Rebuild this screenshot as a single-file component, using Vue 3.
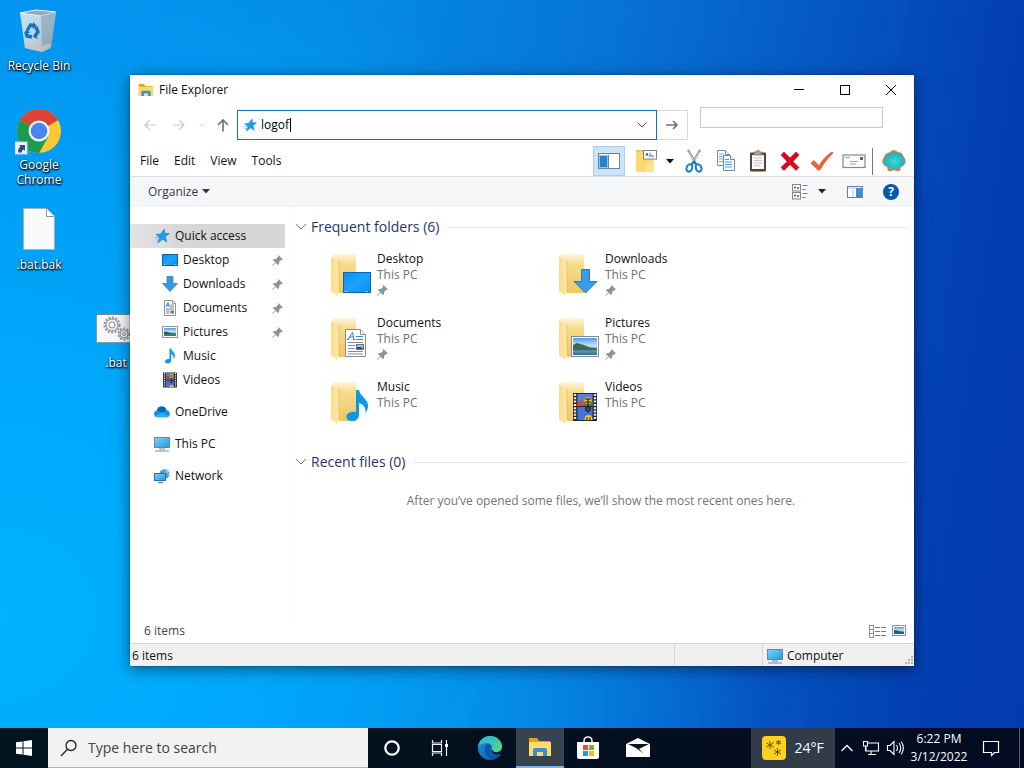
<script setup>
import { ref } from 'vue'

const address = ref('logof')
const filter = ref('')
const search = ref('')

const pinned = [
  { name: 'Desktop', icon: 'desktop', pin: true },
  { name: 'Downloads', icon: 'download', pin: true },
  { name: 'Documents', icon: 'document', pin: true },
  { name: 'Pictures', icon: 'picture', pin: true },
  { name: 'Music', icon: 'music', pin: false },
  { name: 'Videos', icon: 'video', pin: false },
]
const roots = [
  { name: 'OneDrive', icon: 'cloud' },
  { name: 'This PC', icon: 'pc' },
  { name: 'Network', icon: 'network' },
]
const tools = [
  { name: 'Cut', icon: 'cut' },
  { name: 'Copy', icon: 'copy' },
  { name: 'Paste', icon: 'paste' },
  { name: 'Delete', icon: 'delete' },
  { name: 'Properties', icon: 'check' },
  { name: 'E-mail', icon: 'email' },
]
</script>

<template>
  <div class="screen">
    <svg class="sprites" aria-hidden="true">
      <defs>
        <linearGradient id="blueFill" x1="0" y1="0" x2="1" y2="1">
          <stop offset="0" stop-color="#0a8cf0" /><stop offset=".5" stop-color="#1ba4ff" /><stop offset="1" stop-color="#0a8df0" />
        </linearGradient>
        <linearGradient id="pcFill" x1="0" y1="0" x2="1" y2="1">
          <stop offset="0" stop-color="#7fd0f6" /><stop offset="1" stop-color="#1f9be0" />
        </linearGradient>
        <linearGradient id="folderBack" x1="0" y1="0" x2="0" y2="1">
          <stop offset="0" stop-color="#fdf6dc" /><stop offset=".25" stop-color="#f8dc8e" /><stop offset="1" stop-color="#efc765" />
        </linearGradient>
        <linearGradient id="folderFront" x1="0" y1="0" x2="1" y2="0">
          <stop offset="0" stop-color="#f7dc8c" /><stop offset="1" stop-color="#ffe9a6" />
        </linearGradient>
        <linearGradient id="photo" x1="0" y1="0" x2="0" y2="1">
          <stop offset="0" stop-color="#4f9ce8" /><stop offset=".45" stop-color="#c7e4f5" /><stop offset=".6" stop-color="#7fb3c4" /><stop offset="1" stop-color="#2c6f92" />
        </linearGradient>
        <linearGradient id="edgeTop" x1="0" y1="0" x2="1" y2="1">
          <stop offset="0" stop-color="#36b4e5" /><stop offset=".55" stop-color="#38c9b0" /><stop offset="1" stop-color="#72da58" />
        </linearGradient>
        <linearGradient id="edgeBase" x1="0" y1="0" x2="1" y2="1">
          <stop offset="0" stop-color="#1b9de2" /><stop offset="1" stop-color="#0c4aa0" />
        </linearGradient>
        <linearGradient id="binFill" x1="0" y1="0" x2="1" y2="1">
          <stop offset="0" stop-color="#c9e3f3" /><stop offset=".6" stop-color="#b9cfdd" /><stop offset="1" stop-color="#9d9fa5" />
        </linearGradient>
        <radialGradient id="shellFill" cx=".5" cy=".55" r=".6">
          <stop offset="0" stop-color="#46dde0" /><stop offset=".7" stop-color="#22b5bd" /><stop offset="1" stop-color="#6d9a72" />
        </radialGradient>
      </defs>

      <symbol id="star" viewBox="0 0 16 16">
        <path d="M10.300 1l.5 4.300 4.700.2-4 3 1.300 5.400-4.100-2.700L3.800 15l1.900-5.500L2 6.500l4.700-.6z" fill="#229bea" stroke="#1680ce" stroke-width=".6" />
        <path d="M1 9.500h4M2 12h3" stroke="#4aabe8" stroke-width=".8" />
      </symbol>
      <symbol id="desktop" viewBox="0 0 16 16">
        <rect x=".5" y="2.500" width="15" height="11" fill="url(#blueFill)" stroke="#0766ad" />
        <path d="M2 12.500h1M12.500 12.500h2" stroke="#d8f0ff" stroke-width=".6" />
      </symbol>
      <symbol id="download" viewBox="0 0 16 16">
        <path d="M5 .5h6v7h4.500L8 15.500.5 7.500H5z" fill="#3a94e2" stroke="#2879bd" stroke-width=".7" />
      </symbol>
      <symbol id="document" viewBox="0 0 16 16">
        <path d="M2.500.5h8l3 3v12h-11z" fill="#fff" stroke="#8b9298" />
        <path d="M10.500.5v3h3" fill="none" stroke="#8b9298" stroke-width=".8" />
        <path d="M4 7l2-4.500L7.500 7M4.700 5.500h2.200" fill="none" stroke="#2583c9" />
        <path d="M8.500 5h3.500M8 7h4M4 9h8M4 11h3.500M4 13h3.500" stroke="#617386" stroke-width=".9" />
        <rect x="8.500" y="10.500" width="3.500" height="3" fill="#5a7791" />
      </symbol>
      <symbol id="picture" viewBox="0 0 16 16">
        <rect x=".5" y="2.500" width="15" height="11" fill="#fff" stroke="#8795a0" />
        <rect x="2" y="4" width="12" height="8" fill="url(#photo)" />
        <path d="M2 7.500c3 0 5 1 7 1.700l5 .6v.7H2z" fill="#34594f" />
      </symbol>
      <symbol id="music" viewBox="0 0 16 16">
        <path d="M7.500.5h1.700c.3 3 4.100 3.600 3.700 7.500-.2 1.500-1 2.500-1.700 3 .8-2.800-.3-4.300-2-5v6.200c0 2-1.700 3.300-3.500 3.300s-2.800-1-2.700-2.300c.1-1.500 2-2.700 4.500-2.200z" fill="#0b98e8" />
      </symbol>
      <symbol id="video" viewBox="0 0 16 16">
        <rect x="1" y=".5" width="14" height="15" fill="#292b30" />
        <path d="M2.500 1v14M13.500 1v14" stroke="#e5e5e5" stroke-width="1.300" stroke-dasharray="1.300 1" />
        <rect x="4" y="1" width="8" height="6.500" fill="#5575ce" /><rect x="4" y="8.500" width="8" height="6.500" fill="#4b6fd0" />
        <path d="M4 5l3-1 1 2 4-1v2.500H4z" fill="#9c4557" />
        <circle cx="9.500" cy="4" r="2" fill="#e8c51c" /><path d="M8 4h3.500M9.500 6v4M7.800 9l1.700 2 1.800-2" stroke="#282522" stroke-width=".8" fill="none" />
        <path d="M7.500 15a2 2 0 0 1 4 0z" fill="#edc813" />
      </symbol>

      <symbol id="desktop-large" viewBox="0 0 28 32">
        <rect x=".5" y="10.500" width="27" height="20" fill="url(#blueFill)" stroke="#0766ad" />
        <path d="M2 29.500h3M22 29.500h4" stroke="#d8f0ff" stroke-dasharray="1 1" />
      </symbol>
      <symbol id="download-large" viewBox="0 0 28 32">
        <path d="M10.500 7.500h8v12H26L14.500 31 3 19.500h7.500z" fill="#3a9be8" stroke="#2879bd" />
      </symbol>
      <symbol id="document-large" viewBox="0 0 28 32">
        <path d="M2.500 3.500h15l5 5v22h-20z" fill="#fff" stroke="#858c92" />
        <path d="M17.500 3.500v5h5" fill="#f4f5f6" stroke="#858c92" />
        <path d="M5 13.500l4.500-7 1.500 7M6.500 11h4M4 13.500h2M10 13.500h2" fill="none" stroke="#2583c9" />
        <path d="M13 10.500h7M13 13.500h7" stroke="#3d8bca" />
        <path d="M5 16.500h15M5 19.500h7M5 22.500h7M5 25.500h15M5 28h15" stroke="#7390a8" />
        <rect x="13.500" y="18.500" width="7" height="5" fill="#a9c3d5" stroke="#5f7181" /><path d="M14 21h4l2 2h-6z" fill="#324f62" />
      </symbol>
      <symbol id="picture-large" viewBox="0 0 28 32">
        <rect x=".5" y="10.500" width="27" height="20" fill="#fff" stroke="#7f8c97" />
        <rect x="2" y="12" width="24" height="17" fill="url(#photo)" />
        <path d="M2 19l4-2 7 2 6 2.500 7 1v1H2z" fill="#3d6e4c" /><path d="M2 22.500h24v2H2z" fill="#335c62" opacity=".7" />
      </symbol>
      <symbol id="music-large" viewBox="0 0 28 32">
        <path d="M13 0h3c1 7 10 9 9 17-.3 3-2 5-3 6.500 1.500-5-1-9-6-10.500v12c0 4-3.500 6-7 6s-6-2-5.500-5c.5-3 4.500-5 9.500-4z" fill="#0b98e8" />
      </symbol>
      <symbol id="video-large" viewBox="0 0 28 32">
        <rect x="2" y="3" width="24" height="28" fill="#25272c" />
        <path d="M4 4v26M24 4v26" stroke="#eaeaea" stroke-width="2.400" stroke-dasharray="2 1.300" />
        <rect x="6.500" y="4" width="15" height="12" fill="#5d80d4" /><rect x="6.500" y="17" width="15" height="13" fill="#4772d6" />
        <path d="M6.500 12l3-2 3 3 3-1 6 1v3h-15z" fill="#c94b4c" /><path d="M12 16q4-4 9.500-3v3z" fill="#3e7c50" />
        <circle cx="17" cy="10.500" r="3.500" fill="#f0cf19" /><path d="M14 9h6M14 12h6M17 8v12M14 18l3 4 3-4M15 21v-4h4v4" stroke="#25211c" stroke-width="1.200" fill="none" />
        <path d="M13.500 30q0-5 4-5t4 5z" fill="#f0cf19" /><path d="M16 27v3M19 27v3" stroke="#25211c" />
      </symbol>

      <symbol id="cloud" viewBox="0 0 16 16">
        <path d="M3 6.500A4.800 4.800 0 0 1 12.300 6C14.500 6.300 16 8 15.800 10.200c-.2 1.800-1.400 3-3.300 3H3.600C1.400 13.200 0 11.700 0 9.800c0-1.800 1.300-3.100 3-3.300z" fill="#168de2" />
        <path d="M3 6.500A4.800 4.800 0 0 1 12.300 6L8.500 8.500 3 6.500z" fill="#0864b7" />
        <path d="M8.500 8.500L14.700 12.200c-.6.700-1.300 1-2.200 1H3.600c-1.100 0-1.900-.3-2.600-1z" fill="#29b0ef" />
      </symbol>
      <symbol id="pc" viewBox="0 0 16 16">
        <rect x=".5" y="1.500" width="15" height="10" fill="url(#pcFill)" stroke="#4e7891" stroke-width=".8" />
        <path d="M5 13h6M1 15h14" stroke="#6f8ba0" />
      </symbol>
      <symbol id="network" viewBox="0 0 16 16">
        <circle cx="10.500" cy="6" r="5" fill="#469ed0" />
        <path d="M7 3c2-2 5-2 7 0-1 1-1 2 1 4M8 10c0-3 2-5 5-7" stroke="#a3ddf4" fill="none" />
        <rect x=".5" y="5.500" width="11" height="7" fill="url(#pcFill)" stroke="#28719f" />
        <path d="M4 14.500h5" stroke="#4f91b5" stroke-width="1.500" />
      </symbol>
      <symbol id="pin" viewBox="0 0 12 12">
        <path d="M7 0l5 5-1.200.6-.7-.3-2.400 2.600.1 2L6.500 11 4 8.500.5 12 0 11.500 3.500 8 1 5.500 2.200 4.300l2 .1L6.800 2 6.400 1z" fill="#8d949b" />
      </symbol>
      <symbol id="folder" viewBox="0 0 32 48">
        <path d="M4 3h22c1 0 1 1 1 2v37H10L2 8z" fill="url(#folderBack)" />
        <path d="M2 6l8 4v31l-2 4-5-4c-1 0-1-1-1-2z" fill="url(#folderFront)" />
        <path d="M10 10v31" stroke="#e6bd5d" stroke-width=".8" />
      </symbol>
      <symbol id="explorer" viewBox="0 0 24 20">
        <path d="M1 1h8l2 3h11v15H1z" fill="#e3a01f" /><path d="M1 5h22v14H1z" fill="#ffdb6c" />
        <path d="M5 19v-6q0-2 2-2h10q2 0 2 2v6h-4v-4H9v4z" fill="#3d8fcc" />
      </symbol>
      <symbol id="cut" viewBox="0 0 24 24">
        <path d="M6 1l8.500 15M18 1L9.500 16" stroke="#7f8a94" stroke-width="2.200" />
        <path d="M6.500 2.500L12 12M17.500 2.500L12 12" stroke="#d7dde1" />
        <path d="M10 16c-2-2-5 0-5.500 3s2 4.500 4 3 2-4 1.500-6zM14 16c2-2 5 0 5.500 3s-2 4.500-4 3-2-4-1.500-6z" fill="none" stroke="#1680c4" stroke-width="2" />
        <path d="M9.500 16L12 12.500l2.500 3.500" fill="none" stroke="#1680c4" stroke-width="2" />
      </symbol>
      <symbol id="copy" viewBox="0 0 24 24">
        <g fill="#fff" stroke="#788ca0"><path d="M3.500 1.500h8l4 4v11h-12z" /><path d="M11.500 1.500v4h4" /></g>
        <path d="M5 5h5M5 7.500h7M5 10h7M5 12.500h7" stroke="#6aaee0" />
        <g fill="#fff" stroke="#71869b"><path d="M9.500 6.500h7l4 4v11h-11z" /><path d="M16.500 6.500v4h4" /></g>
        <path d="M11 10.500h4M11 13h7M11 15.500h7M11 18h7" stroke="#469bd8" />
      </symbol>
      <symbol id="paste" viewBox="0 0 24 24">
        <rect x="4" y="3.500" width="16" height="19" rx="1" fill="#554634" /><rect x="6" y="6" width="12" height="14" fill="#f8f9fa" />
        <path d="M8 6V3h2q2-4 4 0h2v3z" fill="#a6a69b" stroke="#6e6959" stroke-width=".7" />
        <path d="M8 9h8M8 11.500h8M8 14h8M8 16.500h6" stroke="#c1c8ce" />
      </symbol>
      <symbol id="delete" viewBox="0 0 24 24">
        <path d="M6 3l6 6 6-6 3 3-6 6.500 6 6-3 3-6-6-6 6-3-3 6-6L3 6z" fill="#d9091c" stroke="#a8101a" stroke-width=".6" />
      </symbol>
      <symbol id="check" viewBox="0 0 24 24">
        <path d="M1 14l3-2.500 5 5.500C13 10 17 6 22 3l1 1C18 9 13 15 10 21H8z" fill="#ee6534" stroke="#c34624" stroke-width=".6" />
      </symbol>
      <symbol id="email" viewBox="0 0 24 24">
        <rect x="1" y="6" width="22" height="12.500" fill="#fcfcfc" stroke="#7e8990" stroke-width="1.200" />
        <path d="M3 8.500h5M8 12.500h8M8 15h6" stroke="#9aa2a8" /><rect x="18" y="8" width="3" height="3" fill="#2e7798" />
      </symbol>
      <symbol id="shell" viewBox="0 0 26 24">
        <path d="M6 18C1 16 0 12 3 8c1-4 4-4 6-5 3-3 5-2 8 0 4 0 5 3 6 5 3 4 2 8-3 10l-1 4h-4l-2-1-2 1H7z" fill="#d9834a" />
        <path d="M8 19C2 16 1 11 5 8c0-3 3-4 5-4 2-2 5-2 7 0 3 0 5 2 5 4 3 4 2 8-4 11l-5 2z" fill="url(#shellFill)" />
        <path d="M12 19L6 8M13 19l-2-14M14 19l3-14M15 19l6-11" stroke="#2bc2cb" fill="none" stroke-width=".7" />
      </symbol>
      <symbol id="caret" viewBox="0 0 8 5"><path d="M0 0h8L4 4.500z" fill="currentColor" /></symbol>
    </svg>

    <main class="desktop">
      <nav class="shortcuts" aria-label="Desktop">
        <a href="#recycle" class="shortcut bin">
          <svg viewBox="0 0 40 44" width="40" height="44">
            <path d="M1 4l16-3 20 2-5 36-9 4-17-4z" fill="url(#binFill)" />
            <path d="M1 4l21 3 15-4-20-2z" fill="#8fabbb" stroke="#e4f3fa" />
            <path d="M22 7l1 36 9-4 5-36z" fill="#809bae" opacity=".55" />
            <path d="M5 34l18 3 9-3-1 5-8 4-17-4z" fill="#cfc4c3" opacity=".7" />
            <g fill="none" stroke="#1175c5" stroke-width="3.400"><path d="M8.500 21l3-5 4 1" /><path d="M17 18l2 5-3 4" /><path d="M13 28l-5-1-1-4" /></g>
            <path d="M14 13l4 4-4 3zM19 30l-5-2 2-4zM5 24l3-4 3 4z" fill="#1175c5" />
          </svg>
          <span>Recycle Bin</span>
        </a>
        <a href="#chrome" class="shortcut chrome">
          <svg viewBox="0 0 48 48" width="48" height="48">
            <circle cx="24" cy="24" r="22" fill="#fbc934" />
            <path d="M24 24L4.950 13A22 22 0 0 1 43.050 13z" fill="#db4437" />
            <path d="M43.050 13H24v11z" fill="#db4437" />
            <path d="M4.950 13A22 22 0 0 0 24 46l9.500-16.500L24 24z" fill="#1a9b50" />
            <circle cx="24" cy="24" r="10.500" fill="#f4f6f8" /><circle cx="24" cy="24" r="8.300" fill="#4a86ee" />
            <rect x="0" y="35" width="12" height="12" fill="#f4f6f8" stroke="#c9d5df" />
            <path d="M3.500 45.500c-1-3 0-4.500 2-6L4 38h6v6l-1.500-1.500c-1.500 1-2 2-1.500 3z" fill="#23508f" />
          </svg>
          <span>Google Chrome</span>
        </a>
        <a href="#bak" class="shortcut bak">
          <svg viewBox="0 0 32 42" width="32" height="42">
            <path d="M.5.5h23l8 8v33H.5z" fill="#f9fafb" stroke="#a4aeb5" /><path d="M23.500.5v8h8" fill="#fff" stroke="#8d9aa4" />
          </svg>
          <span>.bat.bak</span>
        </a>
      </nav>

      <a href="#bat" class="shortcut bat">
        <svg viewBox="0 0 40 30" width="40" height="30">
          <rect x=".5" y=".5" width="39" height="29" fill="#f8f8f8" stroke="#8a969e" /><path d="M0 1h40" stroke="#7b868c" stroke-width="2" />
          <g fill="#ededee" stroke="#8e9296"><circle cx="16" cy="12" r="7.500" stroke-width="2" stroke-dasharray="2 1.500" /><circle cx="16" cy="12" r="6" /><circle cx="16" cy="12" r="3" fill="#f8f8f8" />
            <circle cx="28" cy="21" r="5.500" stroke-width="2" stroke-dasharray="2 1.500" /><circle cx="28" cy="21" r="4" /><circle cx="28" cy="21" r="1.500" /></g>
        </svg>
        <span>.bat</span>
      </a>

      <section class="window" aria-label="File Explorer">
        <header class="titlebar">
          <svg class="i16"><use href="#explorer" /></svg>
          <h1>File Explorer</h1>
          <div class="controls">
            <button aria-label="Minimize"><svg viewBox="0 0 12 12" width="12" height="12"><path d="M1 5.500h10" stroke="#000" /></svg></button>
            <button aria-label="Maximize"><svg viewBox="0 0 12 12" width="12" height="12"><rect x="1.500" y="1.500" width="9" height="9" fill="none" stroke="#000" /></svg></button>
            <button aria-label="Close"><svg viewBox="0 0 12 12" width="12" height="12"><path d="M1 1l10 10M11 1L1 11" stroke="#000" /></svg></button>
          </div>
        </header>

        <div class="address-row">
          <div class="history">
            <button aria-label="Back"><svg viewBox="0 0 14 14" width="14" height="14"><path d="M13 7H2M6.500 2.500L2 7l4.500 4.500" class="faint" /></svg></button>
            <button aria-label="Forward"><svg viewBox="0 0 14 14" width="14" height="14"><path d="M1 7h11M7.500 2.500L12 7l-4.500 4.500" class="faint" /></svg></button>
            <button class="recent" aria-label="Recent locations"><svg viewBox="0 0 8 8" width="6" height="6"><path d="M1 2.500l3 3 3-3" class="faint" /></svg></button>
            <button class="up" aria-label="Up"><svg viewBox="0 0 14 14" width="14" height="14"><path d="M7 13.500V2M2 7l5-5 5 5" fill="none" stroke="#73777a" stroke-width="1.700" /></svg></button>
          </div>
          <div class="address">
            <svg class="i14"><use href="#star" /></svg>
            <input v-model="address" aria-label="Address" />
            <i class="text-caret"></i>
            <button aria-label="Previous locations"><svg viewBox="0 0 10 6" width="10" height="6"><path d="M.5.5L5 5 9.500.5" fill="none" stroke="#555" /></svg></button>
          </div>
          <button class="go" aria-label="Go"><svg viewBox="0 0 14 14" width="14" height="14"><path d="M1 7h11M8 3l4 4-4 4" fill="none" stroke="#737373" stroke-width="1.700" /></svg></button>
          <input v-model="filter" class="filter" aria-label="Search this folder" />
        </div>

        <div class="menu-row">
          <nav class="menu" aria-label="Menu">
            <button>File</button><button>Edit</button><button>View</button><button>Tools</button>
          </nav>
          <div class="tools">
            <button class="active" aria-label="Navigation pane"><svg viewBox="0 0 22 18" width="22" height="18"><rect x=".5" y="1.500" width="21" height="15" fill="#fff" stroke="#6684a0" /><path d="M0 1.500h22" stroke="#6e7985" /><rect x="1" y="3" width="9" height="13" fill="#8cc4ef" /><rect x="2" y="4" width="7" height="11" fill="#2881cf" /><path d="M10.500 3v13" stroke="#6684a0" /></svg></button>
            <button class="folder-tool" aria-label="Go to folder"><svg viewBox="0 0 24 24" width="24" height="24"><path d="M2 1h8l2 2h8v19.500H2z" fill="#f4c748" /><path d="M2 3h10l8 8v11.500H2z" fill="#fbd96f" /><path d="M12 22.500v-6l8-5v11z" fill="#fde48f" /><rect x="9.500" y="1.500" width="13" height="8.500" fill="#fff" stroke="#78838c" /><path d="M12 7l1-3 1 3M15 5h2M15 7h5" stroke="#3d6e8e" fill="none" /></svg></button>
            <button class="drop" aria-label="Folder list"><svg width="8" height="5"><use href="#caret" /></svg></button>
            <button v-for="tool in tools" :key="tool.name" :aria-label="tool.name"><svg width="24" height="24"><use :href="'#' + tool.icon" /></svg></button>
            <span class="divider"></span>
            <button aria-label="Classic shell settings"><svg width="26" height="24"><use href="#shell" /></svg></button>
          </div>
        </div>

        <div class="command-bar">
          <button class="organize">Organize <svg width="8" height="5"><use href="#caret" /></svg></button>
          <div class="view-tools">
            <button class="mode" aria-label="View mode"><svg viewBox="0 0 16 16" width="16" height="16"><g fill="#f9fafb" stroke="#7d868d"><rect x=".5" y=".5" width="8" height="6.500" /><rect x=".5" y="8.500" width="8" height="6.500" /></g><path d="M2 3.500h2M5 4h2M2 11.500h2M5 12h2" stroke="#50595f" stroke-width="1.500" /><path d="M10.500 1.500h5M10.500 5.500h3M10.500 9.500h5M10.500 13.500h3" stroke="#777f84" /></svg></button>
            <button class="drop" aria-label="More views"><svg width="8" height="5"><use href="#caret" /></svg></button>
            <button class="pane" aria-label="Preview pane"><svg viewBox="0 0 16 12" width="16" height="12"><rect x=".5" y=".5" width="15" height="11" fill="#fff" stroke="#71818f" /><path d="M1 2h9M6 3v8" stroke="#b4bfc8" /><rect x="9" y="2" width="6" height="9" fill="#3c8ed0" /></svg></button>
            <button aria-label="Help"><span class="help">?</span></button>
          </div>
        </div>

        <div class="body">
          <nav class="tree" aria-label="Folders">
            <a href="#quick" class="root selected"><svg class="i16"><use href="#star" /></svg><span>Quick access</span></a>
            <a v-for="item in pinned" :key="item.name" :href="'#' + item.name" class="leaf">
              <svg class="i16"><use :href="'#' + item.icon" /></svg><span>{{ item.name }}</span>
              <svg v-if="item.pin" class="pin"><use href="#pin" /></svg>
            </a>
            <a v-for="item in roots" :key="item.name" :href="'#' + item.name" class="root spaced">
              <svg class="i16"><use :href="'#' + item.icon" /></svg><span>{{ item.name }}</span>
            </a>
          </nav>

          <div class="content">
            <h2><svg viewBox="0 0 12 8" width="12" height="8"><path d="M1 1l5 5 5-5" fill="none" stroke="#777" /></svg>Frequent folders (6)</h2>
            <div class="tiles">
              <a v-for="item in pinned" :key="item.name" :href="'#' + item.name" class="tile">
                <span class="thumb">
                  <svg class="folder"><use href="#folder" /></svg>
                  <svg class="overlay"><use :href="'#' + item.icon + '-large'" /></svg>
                </span>
                <span class="label">
                  <span>{{ item.name }}</span><small>This PC</small>
                  <svg v-if="item.pin" class="pin"><use href="#pin" /></svg>
                </span>
              </a>
            </div>
            <h2><svg viewBox="0 0 12 8" width="12" height="8"><path d="M1 1l5 5 5-5" fill="none" stroke="#777" /></svg>Recent files (0)</h2>
            <p>After you’ve opened some files, we’ll show the most recent ones here.</p>
          </div>
        </div>

        <div class="details">
          <span>6 items</span>
          <div class="layouts">
            <button aria-label="Details"><svg viewBox="0 0 17 13" width="17" height="13"><g fill="none" stroke="#8b9094"><rect x=".5" y=".5" width="4" height="4" /><rect x=".5" y="4.500" width="4" height="4" /><rect x=".5" y="8.500" width="4" height="4" /></g><path d="M6 2.500h11M6 6.500h11M6 10.500h11" stroke="#777" stroke-dasharray="5 1" /></svg></button>
            <button aria-label="Large icons"><svg viewBox="0 0 14 12" width="14" height="12"><rect x=".5" y=".5" width="13" height="10" fill="#fff" stroke="#789aae" /><rect x="2" y="2" width="10" height="7" fill="url(#photo)" /><path d="M2 5c4 0 6 2 10 2v2H2z" fill="#33596b" /></svg></button>
          </div>
        </div>
        <footer class="status">
          <span class="count">6 items</span><span class="blank"></span>
          <span class="zone"><svg class="i16"><use href="#pc" /></svg>Computer</span>
          <svg class="grip" viewBox="0 0 9 9" width="9" height="9"><path d="M7 1h2M4 4h2M7 4h2M1 7h2M4 7h2M7 7h2" stroke="#b4b4b4" stroke-width="2" /></svg>
        </footer>
      </section>
    </main>

    <footer class="taskbar">
      <button aria-label="Start"><svg viewBox="0 0 16 16" width="16" height="16"><path d="M0 2.300L6.500 1.400v6.100H0zM7.500 1.200L16 0v7.500H7.500zM0 8.500h6.500v6.100L0 13.700zM7.500 8.500H16V16l-8.500-1.200z" fill="#fff" /></svg></button>
      <label class="search">
        <svg viewBox="0 0 18 18" width="18" height="18"><circle cx="11" cy="6.500" r="5" fill="none" stroke="#222" stroke-width="1.300" /><path d="M7.500 10.200L1 17" stroke="#222" stroke-width="1.300" /></svg>
        <input v-model="search" aria-label="Search" placeholder="Type here to search" />
      </label>
      <button aria-label="Cortana"><svg viewBox="0 0 18 18" width="18" height="18"><circle cx="9" cy="9" r="6.700" fill="none" stroke="#f4f7f8" stroke-width="2.300" /></svg></button>
      <button aria-label="Task view"><svg viewBox="0 0 18 18" width="18" height="18"><path d="M1.500 1v3h9V1M1.500 17v-3h9v3M1.500 5.500h9v7h-9zM15.500 1v16" fill="none" stroke="#eef3f5" stroke-width="1.200" /><rect x="14" y="5" width="3" height="3" fill="#fff" /></svg></button>
      <button class="wide" aria-label="Edge"><svg viewBox="0 0 26 26" width="26" height="26">
        <circle cx="13" cy="13" r="12" fill="url(#edgeBase)" />
        <path d="M1 12C2 5 7 1 13 1c7 0 12 5 12 10 0 4-3 6-7 6-3 0-4-1-3-3 1-3-1-6-5-6-4 0-7 1-9 4z" fill="url(#edgeTop)" />
        <path d="M10 9c-4 3-4 14 8 15 3-1 5-3 6-5-5 3-11 1-11-4 0-2 1-3 1-4-1-1-2-2-4-2z" fill="#1055ad" />
        <path d="M15 14c-2 5 5 7 10 4l1-3c-4 3-8 3-10 1 0-1-1-1-1-2z" fill="#071825" />
      </svg></button>
      <button class="current" aria-label="File Explorer"><svg width="24" height="20"><use href="#explorer" /></svg></button>
      <button aria-label="Store"><svg viewBox="0 0 24 24" width="24" height="24"><path d="M8 7V5q0-4 4-4t4 4v2" fill="none" stroke="#f2f5f7" stroke-width="1.500" /><path d="M1 6h22v15q0 2-2 2H3q-2 0-2-2z" fill="#f9fbfc" /><path d="M7 9h5v5H7z" fill="#e55027" /><path d="M13 9h5v5h-5z" fill="#78b91a" /><path d="M7 15h5v5H7z" fill="#11a1df" /><path d="M13 15h5v5h-5z" fill="#f5b81a" /></svg></button>
      <button class="wide" aria-label="Mail"><svg viewBox="0 0 24 20" width="24" height="20"><path d="M0 6L12 0l12 6v13H0z" fill="#fff" /><path d="M2 6h21l-10 5 5 5-8-6z" fill="#071620" /></svg></button>
      <div class="tray">
        <button class="weather"><svg viewBox="0 0 24 24" width="24" height="24"><rect width="24" height="24" rx="4" fill="#fbd11a" /><g stroke="#6b530c"><path d="M8 5v8M4.500 7l7 4M4.500 11l7-4" /><path d="M16.500 4v5M14 5.200l5 2.600M14 7.800l5-2.600" /><path d="M15.500 12v8M12 14l7 4M12 18l7-4" /></g></svg>24°F</button>
        <button class="small" aria-label="Hidden icons"><svg viewBox="0 0 12 8" width="12" height="8"><path d="M.5 7L6 1.500 11.500 7" fill="none" stroke="#fff" stroke-width="1.300" /></svg></button>
        <button class="small" aria-label="Network"><svg viewBox="0 0 18 16" width="18" height="16"><path d="M6 3h10.500v8H4V7M9 11v3M6 14.500h8M1.500 1.500h4V6h-4zM3.500 6v5" fill="none" stroke="#fff" stroke-width="1.100" /></svg></button>
        <button class="small" aria-label="Volume"><svg viewBox="0 0 18 16" width="18" height="16"><path d="M1.500 5.500H4l4-4v13l-4-4H1.500zM10.500 5q2 3 0 6M13 3q3.500 5 0 10M15.200 1.500q4.300 6.500 0 13" fill="none" stroke="#fff" stroke-width="1.100" /></svg></button>
        <button class="clock"><span>6:22 PM</span><span>3/12/2022</span></button>
        <button class="notices" aria-label="Notifications"><svg viewBox="0 0 18 18" width="18" height="18"><path d="M1.500 2.500h15v11h-4l-3 3v-3h-8z" fill="none" stroke="#fff" stroke-width="1.200" /></svg></button>
        <button class="peek" aria-label="Show desktop"></button>
      </div>
    </footer>
  </div>
</template>

<style>
body { margin: 0; }
</style>

<style scoped>
.screen { height: 100vh; display: flex; flex-direction: column; overflow: hidden; font: 12px/16px "Open Sans", "Noto Sans", sans-serif; color: #111;
  background: radial-gradient(ellipse 75% 90% at 0% 80%, #00b2ff 0%, rgba(0, 172, 255, .85) 35%, rgba(0, 160, 250, 0) 100%), linear-gradient(98deg, #0292ee 0%, #048ce8 30%, #0773d6 55%, #0555c4 75%, #0341b4 88%, #033ab0 100%); }
.screen * { box-sizing: border-box; }
svg { display: block; flex: none; }
.sprites { position: absolute; width: 0; height: 0; }
button { border: 0; padding: 0; margin: 0; background: none; font: inherit; color: inherit; display: flex; align-items: center; justify-content: center; }
input { font: inherit; border: 0; padding: 0; min-width: 0; outline: 0; background: none; }
a { color: inherit; text-decoration: none; }
.i16 { width: 16px; height: 16px; }
.i14 { width: 14px; height: 14px; }
.pin { width: 11px; height: 11px; }

.desktop { flex: 1; min-height: 0; position: relative; }
.shortcuts { display: flex; flex-direction: column; width: 78px; padding-top: 9px; }
.shortcut { display: flex; flex-direction: column; align-items: center; text-align: center; color: #fff; font-size: 12px; line-height: 15px; text-shadow: 1px 1px 2px #000, 0 1px 2px #000; }
.shortcut span { max-width: 76px; }
.bin { gap: 5px; height: 98px; }
.chrome { gap: 2px; height: 101px; }
.chrome span { width: 60px; }
.bak { gap: 7px; }
.bat { position: absolute; left: 96px; top: 313px; gap: 12px; }

.window { position: absolute; inset: 75px 110px 62px 130px; display: flex; flex-direction: column; background: #fff; box-shadow: 0 3px 14px rgba(0, 0, 0, .5), 0 0 1px #123; }
.titlebar { display: flex; align-items: center; height: 29px; padding-left: 8px; }
h1 { margin: 0 0 0 5px; font-size: 12px; line-height: 16px; font-weight: 400; }
.controls { margin-left: auto; display: flex; }
.controls button { width: 46px; height: 28px; }

.address-row { display: flex; align-items: flex-start; height: 42px; padding: 6px 31px 0 5px; }
.history { display: flex; width: 102px; height: 30px; }
.history button { width: 29px; }
.history .recent { width: 17px; }
.history .up { width: 25px; }
.faint { fill: none; stroke: #c9c9c9; stroke-width: 1.200; }
.address { position: relative; flex: 1; height: 30px; display: flex; align-items: center; gap: 4px; padding-left: 5px; border: 1px solid #1372b8; }
.address input { flex: 1; align-self: stretch; }
.address button { width: 28px; height: 28px; }
.text-caret { position: absolute; left: 52px; top: 7px; width: 1px; height: 14px; background: #000; }
.go { width: 31px; height: 30px; border: 1px solid #d9d9d9; border-left: 0; }
.filter { width: 183px; height: 21px; margin: -3px 0 0 12px; border: 1px solid #c9c9c9; }

.menu-row { display: flex; align-items: stretch; justify-content: space-between; height: 31px; padding-right: 4px; border-bottom: 1px solid #dcdfe3; }
.menu { display: flex; gap: 15px; padding-left: 10px; }
.tools { display: flex; align-items: stretch; }
.tools button { width: 32px; }
.tools .active { background: #cce4f7; border: 1px solid #a9cfea; }
.tools .folder-tool { margin-left: 5px; }
.tools .drop { width: 16px; color: #111; }
.divider { width: 1px; margin: 2px 5px 1px 2px; background: #777; }

.command-bar { display: flex; align-items: center; justify-content: space-between; height: 30px; padding: 0 5px 0 18px; background: #f5f6f8; border-bottom: 1px solid #f0f2f4; color: #30384f; }
.organize { gap: 4px; }
.view-tools { display: flex; }
.view-tools button { width: 36px; height: 28px; }
.view-tools .mode { width: 20px; }
.view-tools .drop { width: 24px; color: #222; }
.view-tools .pane { width: 36px; margin-left: 3px; }
.help { width: 16px; height: 16px; border-radius: 50%; background: #0957ab; color: #fff; font-weight: 700; line-height: 16px; }

.body { flex: 1; min-height: 0; display: flex; }
.tree { width: 165px; flex: none; padding: 17px 9px 0 0; border-right: 1px solid #fafafa; }
.tree a { display: flex; align-items: center; gap: 5px; height: 24px; }
.tree .root { padding-left: 24px; }
.tree .leaf { padding: 0 2px 0 32px; }
.tree .selected { background: linear-gradient(90deg, #e2e2e2, #d6d6d6 40%); }
.tree .spaced { margin-top: 8px; }
.tree .pin { margin-left: auto; }

.content { flex: 1; min-width: 0; padding: 9px 7px 0 0; }
h2 { display: flex; align-items: center; gap: 4px; margin: 0; font-size: 14px; line-height: 22px; font-weight: 400; color: #26346a; }
h2::after { content: ""; flex: 1; height: 1px; margin-left: 4px; background: #e1e3e6; }
.tiles { display: grid; grid-template-columns: repeat(auto-fill, 228px); grid-auto-rows: 64px; padding: 13px 64px 8px 34px; }
.tile { display: flex; gap: 6px; }
.thumb { position: relative; width: 42px; height: 48px; }
.folder { width: 32px; height: 48px; }
.overlay { position: absolute; right: 0; bottom: 5px; width: 28px; height: 32px; }
.label { display: flex; flex-direction: column; }
.label small { font-size: 12px; color: #6f6f6f; }
.label .pin { margin-top: 2px; }
p { margin: 20px 0 0; text-align: center; color: #757575; }

.details { display: flex; align-items: center; justify-content: space-between; height: 24px; padding: 0 8px 0 14px; color: #444; }
.layouts { display: flex; gap: 6px; }
.status { position: relative; display: flex; height: 23px; background: #f0f0f0; border-top: 1px solid #d6d6d6; line-height: 22px; }
.count { flex: 1; padding: 1px 0 0 2px; }
.blank { width: 89px; border: solid #d6d6d6; border-width: 0 1px; }
.zone { display: flex; align-items: center; gap: 4px; width: 151px; padding: 1px 0 0 4px; }
.grip { position: absolute; right: 1px; bottom: 1px; }

.taskbar { display: flex; flex: none; height: 40px; background: linear-gradient(90deg, #031521, #04101e 50%, #030b22); color: #fff; }
.taskbar button { width: 48px; flex: none; }
.taskbar .wide { width: 52px; }
.taskbar .current { background: #37434e; border-bottom: 2px solid #76b9ed; }
.search { flex: 0 1 320px; min-width: 48px; display: flex; align-items: center; gap: 10px; padding-left: 12px; background: #f2f2f2; border-bottom: 1px solid #b5b5b5; overflow: hidden; }
.search input { flex: 1; font-size: 14px; line-height: 20px; }
.search input::placeholder { color: #444; opacity: 1; }
.tray { display: flex; margin-left: auto; }
.taskbar .weather { width: 84px; gap: 8px; background: #323c49; font-size: 14px; }
.taskbar .small { width: 24px; }
.taskbar .clock { width: 64px; flex-direction: column; line-height: 18px; }
.taskbar .notices { width: 40px; }
.taskbar .peek { width: 5px; border-left: 1px solid #586170; margin-left: 8px; }
</style>
